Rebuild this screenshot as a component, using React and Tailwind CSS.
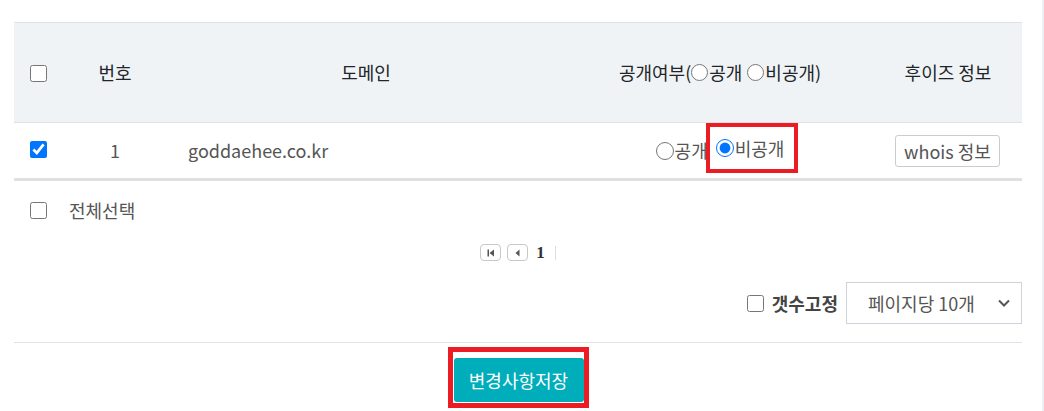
import React from "react"

function PagerButton({ first }) {
    return (
        <span className="inline-flex items-center justify-center w-[21px] h-[17px] border border-[#c8c8c8] rounded-[4px] bg-white">
            <svg width="10" height="8" viewBox="0 0 10 8">
                {first && <rect x="1.5" y="0.5" width="1.5" height="7" fill="#555" />}
                <polygon points={first ? "8,0.5 8,7.5 3.5,4" : "6.5,0.5 6.5,7.5 2.5,4"} fill="#555" />
            </svg>
        </span>
    )
}

export default function App() {
    return (
        <div className="w-[1044px] h-[411px] bg-white flex text-[18px] text-[#212529]" style={{ fontFamily: '"Noto Sans CJK KR", "Noto Sans", sans-serif' }}>
            <div className="w-[1042px] pl-[14px] pr-[20px] pt-[22px]">
                <table className="w-[1008px] border-collapse table-fixed">
                    <thead>
                        <tr className="bg-[#f0f3f6] h-[100px] border-t border-b border-[#dee2e6]">
                            <th className="w-[50px] pl-[16px] pb-[4px] text-left font-normal">
                                <input type="checkbox" className="w-[17px] h-[17px] m-0 align-middle" />
                            </th>
                            <th className="w-[102px] font-normal">번호</th>
                            <th className="w-[400px] font-normal">도메인</th>
                            <th className="w-[308px] font-normal">
                                <span className="inline-flex items-center">
                                    공개여부(
                                    <input type="radio" name="h" className="w-[17px] h-[17px] m-0 mr-[1px]" />공개
                                    <input type="radio" name="h" className="w-[17px] h-[17px] m-0 ml-[5px] mr-[1px]" />비공개)
                                </span>
                            </th>
                            <th className="w-[148px] font-normal">후이즈 정보</th>
                        </tr>
                    </thead>
                    <tbody>
                        <tr className="h-[57px] border-b-[3px] border-[#e0e0e0] text-[#555]">
                            <td className="pl-[16px] pb-[7px]">
                                <input type="checkbox" defaultChecked className="w-[17px] h-[17px] m-0 align-middle" />
                            </td>
                            <td className="text-center">1</td>
                            <td className="pl-[22px]">goddaehee.co.kr</td>
                            <td className="text-center">
                                <span className="inline-flex items-center ml-[14px]">
                                    <input type="radio" name="r1" className="w-[18px] h-[18px] m-0 mr-[1px]" />
                                    <span>공개</span>
                                    <span className="inline-flex items-center border-[4px] border-[#ec1c24] h-[50px] pl-[6px] pr-[10px] ml-[-2px] mb-[5px]">
                                        <input type="radio" name="r1" defaultChecked className="w-[18px] h-[18px] m-0 mr-[1px]" />
                                        비공개
                                    </span>
                                </span>
                            </td>
                            <td className="text-center">
                                <button className="border border-[#ccc] rounded-[3px] bg-white text-[#555] px-[8px] h-[32px] leading-[30px] ml-[-1px]">whois 정보</button>
                            </td>
                        </tr>
                    </tbody>
                </table>

                <div className="flex items-center h-[18px] mt-[20px] pl-[16px] text-[#555]">
                    <input type="checkbox" className="w-[17px] h-[17px] m-0" />
                    <span className="ml-[22px]">전체선택</span>
                </div>

                <div className="flex items-center justify-center h-[17px] mt-[25px] gap-[6px]">
                    <PagerButton first />
                    <PagerButton />
                    <span className="ml-[2px] font-bold text-[17px] text-[#333] leading-none" style={{ fontFamily: '"Liberation Serif", serif' }}>1</span>
                    <span className="ml-[4px] w-px h-[14px] bg-[#ddd]"></span>
                </div>

                <div className="flex items-center justify-end mt-[21px] h-[42px]">
                    <input type="checkbox" className="w-[17px] h-[17px] m-0" />
                    <span className="ml-[8px] font-bold text-[#444]">갯수고정</span>
                    <div className="ml-[8px] w-[176px] h-[42px] border border-[#ccd3da] flex items-center justify-between pl-[21px] pr-[10px] text-[#555]">
                        <span>페이지당 10개</span>
                        <svg width="14" height="10" viewBox="0 0 14 10">
                            <polyline points="2,2.5 7,7.5 12,2.5" fill="none" stroke="#555" strokeWidth="2" />
                        </svg>
                    </div>
                </div>

                <div className="border-t border-[#e3e3e3] mt-[18px] flex justify-center">
                    <div className="mt-[4px] border-[5px] border-[#ec1c24] pt-[6px] pl-[1px] pb-[1px] pr-0 bg-white">
                        <button className="bg-[#00adbb] text-white w-[130px] h-[44px] rounded-[3px]">변경사항저장</button>
                    </div>
                </div>
            </div>
            <div className="w-[2px] h-full bg-[#eef0f3]"></div>
        </div>
    )
}
